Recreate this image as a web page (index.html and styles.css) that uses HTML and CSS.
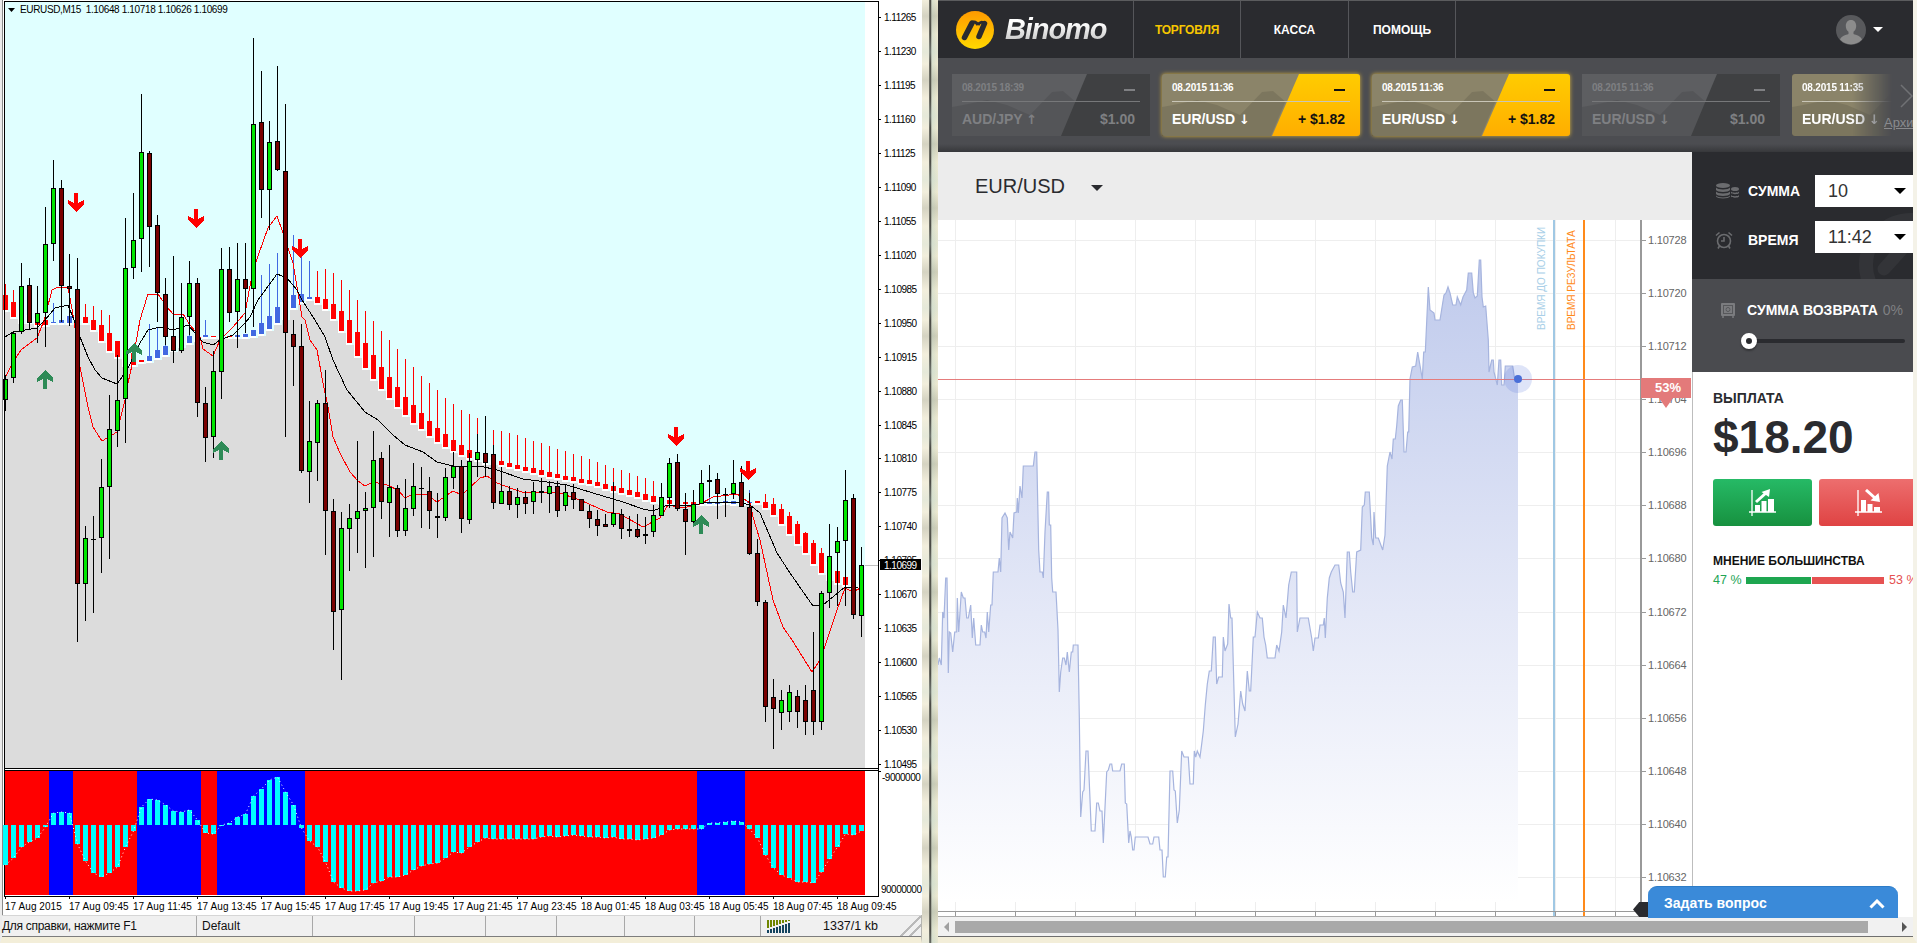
FILE: index.html
```html
<!DOCTYPE html>
<html>
  <head>
    <meta charset="utf-8">
    <title>EURUSD M15 / Binomo</title>
    <link rel="stylesheet" href="styles.css">
  </head>
  <body>
    <svg class="defs" width="0" height="0">
      <defs>
        <symbol id="hills" viewBox="0 0 198 62">
          <path d="M0 33L11 31L35 26L55 31L78 41L100 18L111 17L125 29L140 40L198 44V62H0Z" />
        </symbol>
      </defs>
    </svg>

    <div class="desk">
      <!-- terminal window -->
      <div class="mt4">
        <svg id="mt4chart" class="mt4-chart" width="919" height="915" viewBox="3 0 919 915"></svg>
        <div class="status">
          <div class="cell cell-help">Для справки, нажмите F1</div>
          <div class="cell cell-profile">Default</div>
          <div class="cell cell-a"></div>
          <div class="cell cell-b"></div>
          <div class="cell cell-c"></div>
          <div class="cell cell-d"></div>
          <div class="cell cell-e"></div>
          <div class="cell cell-f"></div>
          <div class="cell cell-net">
            <svg width="24" height="13" viewBox="0 0 24 13">
              <path class="net-top" d="M1 0h2v8H1zM4 0h2v7H4zM7 0h2v6H7zM10 0h2v5h-2zM13 0h2v4h-2zM16 0h2v3h-2zM19 0h2v2h-2zM22 0h2v1h-2z" />
              <path class="net-bottom" d="M1 10h2v3H1zM4 9h2v4H4zM7 8h2v5H7zM10 7h2v6h-2zM13 6h2v7h-2zM16 5h2v8h-2zM19 4h2v9h-2zM22 3h2v10h-2z" />
            </svg>
            <span class="net-text">1337/1 kb</span>
          </div>
        </div>
      </div>

      <div class="divider"></div>

      <!-- browser window -->
      <div class="web">
        <div class="topbar">
          <div class="logo">
            <svg width="40" height="40" viewBox="0 0 40 40">
              <defs>
                <linearGradient id="logofill" x1="0" y1="0" x2="0" y2="1">
                  <stop offset="0" stop-color="#ff9a00" />
                  <stop offset="1" stop-color="#ffd800" />
                </linearGradient>
              </defs>
              <circle cx="20" cy="20" r="19" fill="url(#logofill)" />
              <path class="logo-mark" d="M9.5 27.5L17 13M24 26.5L29.5 13.5" />
              <path class="logo-link" d="M17 13Q20.5 10.500 23 15M23 15Q26 10.500 29.5 13.5" />
            </svg>
            <span class="logo-text">Binomo</span>
          </div>
          <a class="nav nav-on" href="#">ТОРГОВЛЯ</a>
          <a class="nav" href="#">КАССА</a>
          <a class="nav nav-last" href="#">ПОМОЩЬ</a>
          <div class="user">
            <svg width="30" height="30" viewBox="0 0 30 30">
              <circle cx="15" cy="15" r="15" fill="#58595c" />
              <path fill="#8c8c8c" d="M15 5c3.4 0 5.2 2.7 5.2 6 0 2.6-1.100 4.800-2.700 5.800v2.200c3 1 7 2 8.500 5.500a15 15 0 0 1-22 0c1.500-3.500 5.500-4.500 8.500-5.500v-2.200c-1.600-1-2.700-3.200-2.700-5.800 0-3.300 1.800-6 5.200-6z" />
            </svg>
            <span class="user-caret"></span>
          </div>
        </div>

        <div class="deals">
          <div class="deal">
            <svg class="deal-hills"><use href="#hills" /></svg>
            <div class="deal-row deal-row-top"><span class="deal-date">08.2015 18:39</span><span class="deal-dash"></span></div>
            <div class="deal-row"><span>AUD/JPY <b class="deal-arrow">↑</b></span><span>$1.00</span></div>
          </div>
          <div class="deal deal-win">
            <svg class="deal-hills"><use href="#hills" /></svg>
            <div class="deal-row deal-row-top"><span class="deal-date">08.2015 11:36</span><span class="deal-dash"></span></div>
            <div class="deal-row"><span>EUR/USD <b class="deal-arrow">↓</b></span><span class="deal-sum">+ $1.82</span></div>
          </div>
          <div class="deal deal-win">
            <svg class="deal-hills"><use href="#hills" /></svg>
            <div class="deal-row deal-row-top"><span class="deal-date">08.2015 11:36</span><span class="deal-dash"></span></div>
            <div class="deal-row"><span>EUR/USD <b class="deal-arrow">↓</b></span><span class="deal-sum">+ $1.82</span></div>
          </div>
          <div class="deal">
            <svg class="deal-hills"><use href="#hills" /></svg>
            <div class="deal-row deal-row-top"><span class="deal-date">08.2015 11:36</span><span class="deal-dash"></span></div>
            <div class="deal-row"><span>EUR/USD <b class="deal-arrow">↓</b></span><span>$1.00</span></div>
          </div>
          <div class="deal deal-win deal-fade">
            <svg class="deal-hills"><use href="#hills" /></svg>
            <div class="deal-row deal-row-top"><span class="deal-date">08.2015 11:35</span></div>
            <div class="deal-row"><span>EUR/USD <b class="deal-arrow">↓</b></span></div>
          </div>
          <svg class="deals-next" width="14" height="24" viewBox="0 0 14 24"><path d="M1 1L12 12L1 23" /></svg>
          <a class="deals-archive" href="#">Архив</a>
        </div>

        <div class="trade">
          <div class="plot">
            <div class="plot-head">
              <span class="pair">EUR/USD</span>
              <span class="pair-caret"></span>
            </div>
            <svg id="plotchart" class="plot-chart" width="754" height="697" viewBox="938 220 754 697"></svg>
          </div>

          <div class="side">
            <div class="side-top">
              <svg class="side-mark" width="60" height="70" viewBox="0 0 60 70">
                <circle cx="53" cy="56" r="45" />
                <path d="M26 60L44 40" />
              </svg>
              <div class="field">
                <svg class="field-icon" width="24" height="16" viewBox="0 0 24 16">
                  <g class="coins">
                    <ellipse cx="8" cy="2.5" rx="7" ry="2.5" />
                    <path d="M1 4.5c1 2.600 13 2.600 14 0v2.500c-1 2.600-13 2.600-14 0zM1 8.500c1 2.600 13 2.600 14 0V11c-1 2.600-13 2.600-14 0zM1 12.500c1 2.600 13 2.600 14 0v1c-1 2.600-13 2.600-14 0z" />
                    <ellipse cx="20" cy="6" rx="4" ry="2" />
                    <path d="M16 8.500c.6 1.600 7.400 1.600 8 0V10c-.6 1.600-7.400 1.600-8 0zM16 12c.6 1.600 7.400 1.600 8 0v1.500c-.6 1.600-7.400 1.600-8 0z" />
                  </g>
                </svg>
                <span class="field-label">СУММА</span>
                <div class="picker"><span>10</span><i class="picker-caret"></i></div>
              </div>
              <div class="field field-time">
                <svg class="field-icon" width="24" height="20" viewBox="0 0 18 20" preserveAspectRatio="xMinYMid">
                  <g class="alarm">
                    <circle cx="9" cy="11" r="6.5" />
                    <path d="M9 7v4H6M4.5 16L3 18.5M13.5 16L15 18.5M1 5.5L4.5 2.500M17 5.5L13.5 2.500" />
                  </g>
                </svg>
                <span class="field-label">ВРЕМЯ</span>
                <div class="picker"><span>11:42</span><i class="picker-caret"></i></div>
              </div>
            </div>

            <div class="side-mid">
              <div class="back-row">
                <svg class="field-icon" width="16" height="16" viewBox="0 0 16 16">
                  <rect class="safe-body" x="1" y="1" width="14" height="13" rx="1" />
                  <rect class="safe-door" x="3.5" y="3.5" width="9" height="8" />
                  <circle class="safe-door" cx="8" cy="7.5" r="2" />
                  <path class="safe-feet" d="M3 14v2M13 14v2" />
                </svg>
                <span class="field-label">СУММА ВОЗВРАТА</span>
                <span class="back-pct">0%</span>
              </div>
              <div class="slider"><span class="slider-knob"></span></div>
            </div>

            <div class="side-pay">
              <div class="pay-label">ВЫПЛАТА</div>
              <div class="pay-sum">$18.20</div>
              <div class="pay-btns">
                <button class="btn btn-up">
                  <svg width="28" height="27" viewBox="0 0 28 27">
                    <path class="btn-line" d="M3 1V27M0 23H27" />
                    <path class="btn-fill" d="M6 16h5v7H6zM12.5 12h5v11h-5zM19 10h6v13h-6z" />
                    <path class="btn-line btn-arrow" d="M7 13L17 4" />
                    <path class="btn-fill" d="M12.5 3L21 0L20 8z" />
                  </svg>
                </button>
                <button class="btn btn-down">
                  <svg width="28" height="27" viewBox="0 0 28 27">
                    <path class="btn-line" d="M3 1V27M0 23H27" />
                    <path class="btn-fill" d="M6 11h5v12H6zM12.5 15h5v8h-5zM19 18h6v5h-6z" />
                    <path class="btn-line btn-arrow" d="M11 1L20 9" />
                    <path class="btn-fill" d="M25 13L15.5 11.5L23.5 4z" />
                  </svg>
                </button>
              </div>
              <div class="poll-label">МНЕНИЕ БОЛЬШИНСТВА</div>
              <div class="poll">
                <span class="poll-up">47 %</span>
                <span class="poll-bar poll-bar-up"></span>
                <span class="poll-bar poll-bar-down"></span>
                <span class="poll-down">53 %</span>
              </div>
            </div>
          </div>
        </div>

        <div class="hscroll">
          <i class="hscroll-left"></i>
          <div class="hscroll-thumb"></div>
          <i class="hscroll-right"></i>
        </div>

        <div class="chart-handle"></div>
        <div class="chat">
          <span>Задать вопрос</span>
          <svg width="16" height="10" viewBox="0 0 16 10"><path d="M1.5 8.5L8 2L14.5 8.5" /></svg>
        </div>
      </div>
    </div>

    <script src="chart.js"></script>
  </body>
</html>
```

FILE: styles.css
```css
* {
  box-sizing: border-box;
}
html,
body {
  margin: 0;
  height: 943px;
  overflow: hidden;
  background: #f3eed9;
  font-family: "Liberation Sans", Arial, sans-serif;
}
.defs {
  position: absolute;
}
.desk {
  display: flex;
  height: 943px;
}

/* terminal */
.mt4 {
  width: 922px;
  height: 943px;
  border-left: 2px solid #ececec;
  border-bottom: 6px solid #f3eed9;
  border-right: 1px solid #b5b5b0;
  display: flex;
  flex-direction: column;
}
.mt4-chart {
  display: block;
  margin-left: 1px;
  background: #fff;
  box-shadow: -1px 0 0 #8a8a8a;
}
.mt4 svg text {
  font-family: "Liberation Sans", Arial, sans-serif;
}
.mt4-price {
  font-size: 10px;
  letter-spacing: -0.5px;
  fill: #000;
}
.mt4-title {
  font-size: 10px;
  letter-spacing: -0.36px;
  fill: #000;
  white-space: pre;
}
.mt4-time {
  font-size: 10px;
  letter-spacing: 0.06px;
  fill: #000;
}
.mt4-now {
  font-size: 10px;
  letter-spacing: -0.5px;
  fill: #fff;
}
.status {
  display: flex;
  height: 22px;
  background: #f0f0f0;
  border-top: 1px solid #d6d6d6;
  border-bottom: 1px solid #7d7d7d;
  font-size: 12px;
  color: #111;
}
.cell {
  border-right: 1px solid #a8a8a8;
  padding: 3px 0 0 5px;
  white-space: nowrap;
}
.cell-help {
  width: 195px;
  padding-left: 0;
  letter-spacing: -0.3px;
}
.cell-profile {
  width: 116px;
}
.cell-a {
  width: 102px;
}
.cell-b {
  width: 71px;
}
.cell-c {
  width: 71px;
}
.cell-d {
  width: 68px;
}
.cell-e {
  width: 70px;
}
.cell-f {
  width: 66px;
}
.cell-net {
  flex: 1;
  border-right: none;
  display: flex;
  align-items: center;
  padding: 0 0 0 5px;
  background: linear-gradient(135deg, transparent 88%, #b9b9b9 88%, #b9b9b9 90%, transparent 90%, transparent 93%, #b9b9b9 93%, #b9b9b9 95%, transparent 95%);
}
.net-top {
  fill: #6f8600;
}
.net-bottom {
  fill: #14445f;
}
.net-text {
  margin-left: 33px;
  font-size: 12.5px;
}

/* window seam */
.divider {
  width: 16px;
  height: 943px;
  position: relative;
  background: linear-gradient(to right, #f2eedc 0, #f2eedc 7px, #8b8b82 7px, #4a4a44 8px, #4a4a44 9px, #8b8b82 9px, #d9e0cd 10px, #eee9d0 16px);
}
.divider::after {
  content: "";
  position: absolute;
  left: 0;
  top: 0;
  right: 0;
  bottom: 0;
  background: repeating-linear-gradient(to bottom, rgba(120, 125, 110, 0) 0, rgba(120, 125, 110, 0.24) 16px, rgba(120, 125, 110, 0) 34px, rgba(200, 220, 210, 0.3) 52px, rgba(200, 220, 210, 0) 64px);
}

/* browser */
.web {
  width: 979px;
  height: 943px;
  position: relative;
  border-right: 4px solid #f4f2e8;
  border-bottom: 6px solid #f3eed9;
  overflow: hidden;
  display: flex;
  flex-direction: column;
  background: #fff;
}
.topbar {
  height: 58px;
  flex: none;
  display: flex;
  background: #2a2b2f;
  border-top: 1px solid #5b5c5e;
}
.logo {
  width: 195px;
  padding-left: 17px;
  display: flex;
  align-items: center;
  gap: 10px;
}
.logo-mark {
  fill: none;
  stroke: #2a2b2f;
  stroke-width: 5.5;
  stroke-linecap: round;
}
.logo-link {
  fill: none;
  stroke: #2a2b2f;
  stroke-width: 3;
}
.logo-text {
  font-size: 29px;
  font-weight: bold;
  font-style: italic;
  letter-spacing: -1.1px;
  background: linear-gradient(to bottom, #fff 30%, #b8b8b8);
  -webkit-background-clip: text;
  background-clip: text;
  color: transparent;
  padding-right: 3px;
}
.nav {
  width: 107px;
  border-left: 1px solid #55565a;
  color: #fff;
  font-size: 12px;
  font-weight: bold;
  text-decoration: none;
  display: flex;
  align-items: center;
  justify-content: center;
}
.nav-on {
  color: #f6c600;
  letter-spacing: -0.2px;
}
.nav-on + .nav {
  width: 108px;
}
.nav-last {
  width: 108px;
  border-right: 1px solid #55565a;
}
.user {
  margin-left: auto;
  padding-right: 30px;
  display: flex;
  align-items: center;
  gap: 7px;
}
.user-caret {
  border-left: 5px solid transparent;
  border-right: 5px solid transparent;
  border-top: 5px solid #fff;
}

/* deal strip */
.deals {
  height: 94px;
  flex: none;
  position: relative;
  display: flex;
  gap: 12px;
  padding: 16px 0 0 14px;
  overflow: hidden;
  background: linear-gradient(to bottom, #4c4d51 0, #4c4d51 86px, #37383b 94px);
}
.deal {
  width: 198px;
  height: 62px;
  flex: none;
  position: relative;
  padding: 0 15px 0 10px;
  background: #5d5e61;
  color: #7f8083;
  font-size: 14px;
  font-weight: bold;
}
.deal::before {
  content: "";
  position: absolute;
  left: 0;
  top: 0;
  right: 0;
  bottom: 0;
  background: #3f4042;
  clip-path: polygon(135px 0, 100% 0, 100% 100%, 109px 100%);
}
.deal-hills {
  position: absolute;
  left: 0;
  top: 0;
  width: 198px;
  height: 62px;
  fill: rgba(0, 0, 0, 0.09);
  clip-path: polygon(0 0, 135px 0, 109px 100%, 0 100%);
}
.deal-row {
  position: relative;
  display: flex;
  justify-content: space-between;
  align-items: center;
  height: 34px;
}
.deal-row-top {
  height: 28px;
  margin-right: -5px;
  padding-right: 5px;
  border-bottom: 1px solid #77787a;
}
.deal-date {
  font-size: 10px;
  letter-spacing: -0.2px;
}
.deal-arrow {
  font-family: "DejaVu Sans", sans-serif;
  font-size: 13px;
  line-height: 14px;
}
.deal-dash {
  width: 11px;
  height: 2px;
  margin-top: 4px;
  background: #7f8083;
}
.deal-win {
  background: #8b8469;
  color: #fff;
  border-radius: 3px;
  box-shadow: 0 0 4px #d8b23c;
}
.deal-win::before {
  background: linear-gradient(to bottom, #ffcc00, #ffae00);
  clip-path: polygon(137px 0, 100% 0, 100% 100%, 110px 100%);
  border-radius: 0 3px 3px 0;
}
.deal-win .deal-hills {
  fill: rgba(0, 0, 0, 0.1);
}
.deal-win .deal-row-top {
  border-bottom-color: #c9c6b7;
}
.deal-win .deal-dash {
  background: #111;
}
.deal-sum {
  color: #111;
}
.deal-fade {
  -webkit-mask-image: linear-gradient(to right, #000 60px, transparent 100px);
  mask-image: linear-gradient(to right, #000 60px, transparent 100px);
}
.deals-next {
  position: absolute;
  left: 962px;
  top: 26px;
  fill: none;
  stroke: #707174;
  stroke-width: 1.5;
}
.deals-archive {
  position: absolute;
  left: 946px;
  top: 57px;
  font-size: 13px;
  color: #8a8b8e;
}

/* main row */
.trade {
  height: 765px;
  flex: none;
  display: flex;
}
.plot {
  width: 754px;
  flex: none;
}
.plot-head {
  height: 68px;
  display: flex;
  align-items: center;
  padding: 0 0 0 37px;
  background: #ececec;
  color: #2a2b2f;
}
.pair {
  font-size: 20px;
}
.pair-caret {
  margin: 3px 0 0 26px;
  border-left: 6px solid transparent;
  border-right: 6px solid transparent;
  border-top: 6px solid #2a2b2f;
}
.plot-chart {
  display: block;
}
.plot-chart text {
  font-family: "Liberation Sans", Arial, sans-serif;
}
.plot-price {
  font-size: 11px;
  letter-spacing: -0.2px;
  fill: #666;
}
.plot-tag {
  font-size: 10px;
}
.plot-badge {
  font-size: 13px;
  font-weight: bold;
  fill: #fff;
}

/* right column */
.side {
  flex: 1;
  display: flex;
  flex-direction: column;
}
.side-top {
  height: 127px;
  position: relative;
  overflow: hidden;
  padding: 23px 0 0 23px;
  background: #2a2b2f;
}
.side-mark {
  position: absolute;
  right: 0;
  bottom: 0;
  fill: none;
  stroke: #333438;
}
.side-mark circle {
  stroke-width: 14;
}
.side-mark path {
  stroke-width: 13;
  stroke-linecap: round;
  stroke: #333438;
}
.field {
  position: relative;
  display: flex;
  align-items: center;
  height: 32px;
  margin-bottom: 14px;
}
.field-icon {
  flex: none;
  margin-right: 9px;
}
.field-label {
  color: #fff;
  font-size: 14px;
  font-weight: bold;
}
.field-time .field-label,
.field-time .field-icon {
  margin-top: 6px;
}
.picker {
  position: absolute;
  left: 100px;
  top: 0;
  width: 98px;
  height: 32px;
  padding: 0 7px 0 13px;
  display: flex;
  align-items: center;
  justify-content: space-between;
  background: #fff;
  font-size: 18px;
  color: #333;
}
.picker-caret {
  border-left: 6px solid transparent;
  border-right: 6px solid transparent;
  border-top: 6px solid #000;
}
.coins {
  fill: #6b6c6f;
}
.alarm {
  fill: none;
  stroke: #6b6c6f;
  stroke-width: 1.6;
}
.safe-body {
  fill: #7b7c7f;
}
.safe-door {
  fill: none;
  stroke: #57585b;
}
.safe-feet {
  fill: none;
  stroke: #7b7c7f;
  stroke-width: 1.5;
}
.side-mid {
  height: 93px;
  padding: 22px 0 0 28px;
  background: #4a4b4f;
}
.back-row {
  display: flex;
  align-items: center;
  height: 18px;
}
.back-row .field-icon {
  margin-right: 11px;
}
.back-pct {
  margin-left: 5px;
  color: #7f8083;
  font-size: 14px;
}
.slider {
  position: relative;
  width: 152px;
  height: 4px;
  margin: 20px 0 0 33px;
  border-radius: 2px;
  background: #2a2b2f;
}
.slider-knob {
  position: absolute;
  left: -12px;
  top: -6px;
  width: 16px;
  height: 16px;
  border: 5px solid #fff;
  border-radius: 50%;
  background: #2a2b2f;
  box-shadow: 0 2px 2px rgba(0, 0, 0, 0.3);
}
.side-pay {
  flex: 1;
  padding: 18px 0 0 20px;
  background: #fff;
  border-left: 1px solid #bdbdbd;
  color: #2a2b2f;
}
.pay-label {
  font-size: 14px;
  font-weight: bold;
  line-height: 16px;
}
.pay-sum {
  margin-top: 8px;
  font-size: 46px;
  font-weight: bold;
  line-height: 46px;
}
.pay-btns {
  display: flex;
  gap: 7px;
  margin-top: 19px;
}
.btn {
  height: 47px;
  padding: 0;
  border: none;
  border-radius: 3px;
  display: flex;
  align-items: center;
  justify-content: center;
}
.btn-up {
  width: 99px;
  background: linear-gradient(to bottom, #26ba66, #17913f);
}
.btn-down {
  width: 99px;
  background: linear-gradient(to bottom, #ed6e6e, #df4343);
}
.btn-line {
  fill: none;
  stroke: #fff;
  stroke-width: 1.3;
}
.btn-arrow {
  stroke-width: 3;
}
.btn-fill {
  fill: #fff;
}
.poll-label {
  margin-top: 28px;
  font-size: 12px;
  font-weight: bold;
  line-height: 14px;
  color: #111;
  white-space: nowrap;
}
.poll {
  display: flex;
  align-items: center;
  height: 14px;
  margin-top: 5px;
  font-size: 12.5px;
  white-space: nowrap;
}
.poll-bar {
  height: 7px;
  flex: none;
}
.poll-up {
  width: 33px;
  color: #22a455;
  flex: none;
}
.poll-down {
  margin-left: 5px;
  color: #e55050;
}
.poll-bar-up {
  width: 65px;
  margin-right: 1px;
  background: #1ea650;
}
.poll-bar-down {
  width: 72px;
  background: #e65252;
}

/* page scrollbar */
.hscroll {
  flex: 1;
  display: flex;
  align-items: center;
  background: #f1f1f1;
  border-bottom: 1px solid #6f6f6f;
}
.hscroll-thumb {
  width: 913px;
  height: 12px;
  background: #a9a9a9;
}
.hscroll-left,
.hscroll-right {
  display: flex;
  align-items: center;
  justify-content: center;
}
.hscroll-left {
  width: 17px;
}
.hscroll-right {
  flex: 1;
  padding-left: 27px;
}
.hscroll-left::before {
  content: "";
  border-top: 5px solid transparent;
  border-bottom: 5px solid transparent;
  border-right: 5px solid #a0a0a0;
}
.hscroll-right::before {
  content: "";
  border-top: 5px solid transparent;
  border-bottom: 5px solid transparent;
  border-left: 5px solid #555;
}

/* overlays on the chart */
.chart-handle {
  position: absolute;
  left: 695px;
  top: 902px;
  width: 18px;
  height: 15px;
  background: #2a2b2f;
  clip-path: polygon(0 50%, 35% 0, 100% 0, 100% 100%, 35% 100%);
}
.chat {
  position: absolute;
  left: 710px;
  top: 886px;
  width: 250px;
  height: 32px;
  padding: 0 13px 0 16px;
  display: flex;
  align-items: center;
  justify-content: space-between;
  background: #3a8ad9;
  border-top: 1px solid #2d7cc7;
  border-radius: 9px 9px 0 0;
  color: #fff;
  font-size: 14px;
  font-weight: bold;
}
.chat svg {
  fill: none;
  stroke: #fff;
  stroke-width: 3;
  margin-top: 3px;
}
```

FILE: chart.js
```js
var SVGNS = "http://www.w3.org/2000/svg";

function add(parent, tag, attrs, text) {
  var node = document.createElementNS(SVGNS, tag);
  for (var key in attrs) node.setAttribute(key, attrs[key]);
  if (text) node.textContent = text;
  parent.appendChild(node);
  return node;
}
function line(parent, x1, y1, x2, y2, color, width) {
  add(parent, "line", {
    x1: x1, y1: y1, x2: x2, y2: y2,
    stroke: color, "stroke-width": width || 1, "shape-rendering": "crispEdges"
  });
}
function box(parent, x, y, w, h, color) {
  add(parent, "rect", { x: x, y: y, width: w, height: h, fill: color, "shape-rendering": "crispEdges" });
}
function barX(k) {
  return 5.5 + 8 * k;
}

//---------- terminal chart ----------
var mt = document.getElementById("mt4chart");

// one row per bar: up, high, body top, body bottom, low
var candles = [
  [1,375,379,400,411],[1,331,333,378,383],[1,263,286,332,334],[0,278,285,323,329],[1,286,313,323,343],
  [1,207,244,313,347],[1,160,188,244,261],[0,180,188,286,322],[0,254,286,289,326],[0,258,289,584,642],
  [1,526,538,584,621],[1,516,539,540,613],[1,459,487,538,573],[1,395,429,487,559],[1,355,400,431,447],
  [1,218,268,399,443],[1,193,240,268,279],[1,94,152,239,272],[0,151,153,227,267],[0,215,225,293,322],
  [0,278,294,337,345],[0,256,336,351,363],[1,283,317,351,353],[1,261,283,317,335],[0,278,283,403,417],
  [0,387,403,438,462],[1,351,371,437,458],[1,248,269,372,399],[0,247,269,313,322],[1,243,279,312,348],
  [0,243,279,289,333],[1,38,124,289,327],[0,71,122,190,218],[1,121,142,190,230],[0,66,141,170,171],
  [0,104,171,333,437],[0,320,334,347,386],[0,324,346,471,473],[1,401,441,472,503],[1,400,403,443,481],
  [0,370,403,511,555],[0,499,511,612,650],[1,512,528,610,680],[1,504,518,529,571],[1,441,511,519,553],
  [1,492,508,511,568],[1,431,460,508,557],[0,452,458,502,519],[1,445,487,503,537],[0,485,488,531,537],
  [1,479,508,531,536],[1,463,486,509,516],[0,467,488,489,528],[0,477,491,511,529],[0,493,516,518,538],
  [1,468,477,518,521],[1,452,466,478,489],[0,460,466,519,533],[1,453,461,520,524],[1,434,452,460,477],
  [0,416,453,463,477],[0,445,454,503,509],[1,467,491,504,504],[0,486,491,505,510],[1,488,497,505,518],
  [0,491,497,504,514],[1,482,491,502,514],[0,478,491,493,503],[1,481,486,494,513],[0,481,486,511,517],
  [1,485,492,506,511],[0,484,492,500,509],[0,500,499,511,511],[0,505,511,519,528],[0,510,519,526,536],
  [0,514,524,527,527],[1,482,513,525,527],[0,509,514,529,539],[0,516,529,531,537],[0,514,529,537,538],
  [1,517,534,536,544],[1,505,515,532,537],[1,483,497,516,516],[1,458,463,498,508],[0,454,462,509,511],
  [0,493,509,522,555],[1,490,504,522,527],[1,470,483,504,504],[1,465,480,482,497],[0,473,479,494,519],
  [0,488,494,495,517],[1,460,483,494,499],[0,466,482,507,507],[0,493,507,554,555],[0,539,553,602,606],
  [0,600,602,707,722],[0,679,697,709,749],[1,690,700,713,730],[1,685,692,712,722],[0,690,696,712,728],
  [0,685,700,722,735],[0,632,690,722,735],[1,591,593,722,730],[1,524,556,593,608],[1,527,541,553,606],
  [1,470,500,541,606],[0,494,498,615,619],[1,547,565,616,637]
];

// indicator bars: color, top, bottom, top of thin line (0 = none)
var env = [
  ["r",295,310,284],["r",302,317,290],["r",310,322,0],["r",315,322,0],["r",318,325,0],["r",320,325,0],
  ["b",322,323,303],["b",320,323,308],["b",316,323,0],["r",316,323,0],["r",317,323,304],["r",320,330,306],
  ["r",325,341,310],["r",333,351,315],["r",341,357,0],["r",350,365,0],["r",353,365,0],["r",360,362,0],
  ["b",356,361,324],["b",350,358,327],["b",346,355,322],["b",340,350,0],["b",338,346,0],["b",336,343,325],
  ["b",335,340,0],["b",335,337,320],["r",336,337,0],["r",336,337,0],["r",336,337,0],["b",335,337,0],
  ["b",334,337,0],["b",330,336,0],["b",323,334,275],["b",316,329,264],["b",307,323,253],["b",300,318,0],
  ["b",295,308,235],["b",294,302,257],["b",297,299,261],["r",297,303,271],["r",299,309,269],["r",304,319,273],
  ["r",311,331,280],["r",320,343,290],["r",332,356,300],["r",343,368,311],["r",355,379,321],["r",367,389,331],
  ["r",377,398,340],["r",387,407,349],["r",397,415,359],["r",405,423,367],["r",413,429,376],["r",421,436,383],
  ["r",428,442,390],["r",434,447,398],["r",440,451,404],["r",445,455,410],["r",450,458,414],["r",453,460,418],
  ["r",453,463,0],["r",457,463,430],["r",461,465,431],["r",463,467,433],["r",465,469,435],["r",467,471,438],
  ["r",468,473,441],["r",470,475,443],["r",472,477,446],["r",474,478,449],["r",476,480,451],["r",477,481,454],
  ["r",479,483,456],["r",480,484,459],["r",482,486,462],["r",484,489,465],["r",486,491,468],["r",488,493,470],
  ["r",490,495,473],["r",492,497,476],["r",494,500,478],["r",496,502,481],["r",498,503,483],["r",500,504,0],
  ["r",501,504,0],["r",502,504,493],["r",502,504,490],["r",502,504,0],["b",502,504,493],["b",502,504,0],
  ["b",501,503,0],["b",501,504,0],["b",501,504,0],["b",502,503,490],["r",501,503,0],["r",502,508,494],
  ["r",504,515,498],["r",509,524,504],["r",516,534,512],["r",524,544,521],["r",533,553,532],["r",543,564,540],
  ["r",553,573,548],["r",562,579,0],["r",571,583,0],["r",577,585,0],["r",582,587,0],["r",584,588,0]
];

var redLine = [
  [5,378],[13,362],[21,350],[37,338],[43,323],[45,317],[52,290],[58,287],[68,287],[74,320],[80,367],[88,407],
  [93,427],[102,441],[117,432],[125,400],[128,383],[132,365],[140,320],[148,294],[158,294],[167,307],[173,314],
  [183,314],[190,325],[200,337],[203,349],[213,356],[220,340],[233,327],[245,313],[253,270],[268,228],[277,216],
  [283,233],[288,248],[293,263],[302,317],[305,320],[310,340],[317,350],[323,383],[328,407],[333,437],[340,453],
  [350,472],[358,481],[365,486],[373,482],[387,485],[398,490],[405,498],[413,494],[427,495],[437,502],[453,491],
  [462,495],[480,478],[487,476],[497,483],[513,489],[525,493],[542,492],[560,493],[580,500],[607,512],[620,514],
  [643,527],[660,518],[668,505],[683,508],[700,504],[713,497],[737,494],[750,503],[753,517],[760,540],[773,600],
  [783,627],[792,640],[812,672],[820,660],[827,640],[837,610],[845,588],[853,592],[862,587]
];
var blackLine = [
  [5,337],[13,332],[37,328],[45,320],[55,308],[68,305],[74,320],[80,337],[88,357],[95,370],[102,378],[117,384],
  [127,370],[140,343],[148,330],[160,327],[173,330],[188,325],[203,342],[213,345],[220,340],[233,335],[245,323],
  [250,317],[258,300],[277,274],[287,278],[297,290],[302,300],[315,320],[325,337],[333,360],[347,390],[365,412],
  [378,420],[393,435],[405,445],[423,452],[437,462],[453,466],[480,466],[497,470],[523,479],[547,482],[567,485],
  [593,493],[623,502],[643,509],[653,511],[667,505],[693,505],[710,502],[737,502],[750,505],[760,513],[777,553],
  [790,573],[813,606],[823,605],[845,587],[858,588]
];

// pane bars, read as the end of each bar from the zero line at y=825
var hist = [
  40,33,22,17,13,2,-12,-13,-12,19,36,48,52,48,42,22,6,-18,-26,-25,-20,-14,-13,-15,-5,8,9,0,-2,-8,
  -11,-29,-36,-45,-48,-33,-20,3,16,22,37,57,63,66,66,65,58,56,52,52,50,45,41,39,38,33,27,28,22,17,
  13,14,14,14,14,14,14,12,11,12,11,10,11,12,12,13,12,14,14,15,14,13,10,5,4,4,4,4,-2,-2,-3,-4,-3,
  4,13,30,43,50,53,57,57,58,47,34,22,9,10,6
];

var signals = [
  [76,193,1],[196,209,1],[300,239,1],[676,427,1],[748,461,1],
  [45,370,0],[134,343,0],[221,441,0],[701,515,0]
];

function arrow(x, top, down) {
  var shape = down
    ? [[-2,0],[2,0],[2,10],[8,7],[8,11],[0,19],[-8,11],[-8,7],[-2,10]]
    : [[-2,19],[2,19],[2,9],[8,12],[8,8],[0,0],[-8,8],[-8,12],[-2,9]];
  var pts = shape.map(function (p) { return (x + p[0]) + "," + (top + p[1]); }).join(" ");
  add(mt, "polygon", { points: pts, fill: down ? "#ff0000" : "#2e8b57", "shape-rendering": "crispEdges" });
}
function polyline(parent, pts, color) {
  add(parent, "polyline", {
    points: pts.join(" "), fill: "none", stroke: color, "stroke-width": 1, "shape-rendering": "crispEdges"
  });
}

function drawTerminal() {
  box(mt, 5, 2, 860, 766, "#e0ffff");

  var ground = ["5,768", "5," + (env[0][2] + 2)];
  env.forEach(function (e, k) {
    ground.push((barX(k) - 3.5) + "," + (e[2] + 2), (barX(k) + 4.5) + "," + (e[2] + 2));
  });
  ground.push("865," + (env[107][2] + 2), "865,768");
  add(mt, "polygon", { points: ground.join(" "), fill: "#dcdcdc", "shape-rendering": "crispEdges" });

  env.forEach(function (e, k) {
    var c = e[0] == "r" ? "#ff0000" : "#4169e1";
    var x = barX(k);
    if (e[3]) line(mt, x, e[3], x, e[1], c);
    box(mt, x - 3.5, e[1], 6, e[2] - e[1] + 2, "#fff");
    box(mt, x - 2.5, e[1], 5, e[2] - e[1], c);
  });

  polyline(mt, redLine, "#ff0000");
  polyline(mt, blackLine, "#000");

  candles.forEach(function (c, k) {
    var x = barX(k);
    line(mt, x, c[1], x, c[4], "#000");
    box(mt, x - 2.5, c[2], 5, Math.max(c[3] - c[2], 1), "#000");
    if (c[3] - c[2] > 2) box(mt, x - 1.5, c[2] + 1, 3, c[3] - c[2] - 2, c[0] ? "#00e600" : "#7a0000");
  });

  signals.forEach(function (s) { arrow(s[0], s[1], s[2]); });

  // frame and axis
  line(mt, 4, 1.5, 879, 1.5, "#000");
  line(mt, 4.5, 1, 4.5, 897, "#000");
  line(mt, 4, 768.5, 879, 768.5, "#000");
  line(mt, 4, 770.5, 879, 770.5, "#000");
  line(mt, 4, 896, 879, 896, "#000");
  line(mt, 878.5, 1, 878.5, 897, "#000");

  for (var i = 0; i <= 22; i++) {
    var y = 17 + 33.96 * i;
    line(mt, 879, Math.round(y) + 0.5, 881, Math.round(y) + 0.5, "#000");
    add(mt, "text", { x: 884, y: y + 4, "class": "mt4-price" }, (1.11265 - 0.00035 * i).toFixed(5));
  }

  add(mt, "polygon", { points: "8,8 15,8 11.5,12", fill: "#000" });
  add(mt, "text", { x: 20, y: 13, "class": "mt4-title" }, "EURUSD,M15  1.10648 1.10718 1.10626 1.10699");

  line(mt, 865, 565.5, 878, 565.5, "#c0c0c0");
  box(mt, 880, 559, 41, 11, "#000");
  add(mt, "text", { x: 884, y: 568.5, "class": "mt4-now" }, "1.10699");

  // lower pane
  var zones = [[5,49,"#ff0000"],[49,73,"#0000ff"],[73,137,"#ff0000"],[137,201,"#0000ff"],[201,217,"#ff0000"],
    [217,305,"#0000ff"],[305,697,"#ff0000"],[697,745,"#0000ff"],[745,865,"#ff0000"]];
  zones.forEach(function (z) { box(mt, z[0], 771, z[1] - z[0], 124, z[2]); });

  var tips = [];
  hist.forEach(function (h, k) {
    var x = barX(k);
    box(mt, x - 2.5, h < 0 ? 825 + h : 825, 5, Math.max(Math.abs(h), 1), "#00ffff");
    tips.push(x + "," + (825 + h));
  });
  add(mt, "polyline", { points: tips.join(" "), fill: "none", stroke: "#fff", "stroke-width": 1, "stroke-dasharray": "1 3" });

  line(mt, 879, 771.5, 881, 771.5, "#000");
  add(mt, "text", { x: 882, y: 781, "class": "mt4-price" }, "-9000000");
  add(mt, "text", { x: 881, y: 893, "class": "mt4-price" }, "90000000");

  var times = ["17 Aug 2015","17 Aug 09:45","17 Aug 11:45","17 Aug 13:45","17 Aug 15:45","17 Aug 17:45","17 Aug 19:45",
    "17 Aug 21:45","17 Aug 23:45","18 Aug 01:45","18 Aug 03:45","18 Aug 05:45","18 Aug 07:45","18 Aug 09:45"];
  times.forEach(function (t, i) {
    line(mt, 5.5 + 64 * i, 896, 5.5 + 64 * i, 899, "#000");
    add(mt, "text", { x: 5 + 64 * i, y: 909.5, "class": "mt4-time" }, t);
  });
}

//---------- web chart ----------
var plot = document.getElementById("plotchart");

var ticks = [
  [938,665],[939.3,658],[941.3,665],[942.7,612],[944,618],[945.7,578],[947,578],[948.3,673],[949.3,632],[950.7,633],
  [952.7,652],[954.7,632],[956.7,632],[957.3,598],[958.7,632],[961.3,592],[963.3,598],[965,598],[966.7,618],[968.3,618],
  [970.7,605],[972.3,638],[973.7,618],[975.7,645],[980,645],[981.3,625],[982.7,632],[984.7,632],[986,638],[987.3,612],
  [988.7,632],[990.7,605],[992,605],[993.3,572],[998,572],[999.3,558],[1000.7,572],[1002,518],[1005,513],[1007.3,518],
  [1008.7,550],[1010,532],[1012.7,538],[1014,513],[1016.7,512],[1017.3,498],[1018.3,513],[1020,486],[1022,498],[1023.3,466],
  [1033.3,466],[1035,452],[1036.7,452],[1038.7,550],[1040,572],[1042.3,572],[1043.3,578],[1045,532],[1047.3,492],[1048.6,492],
  [1049.3,525],[1050.7,525],[1051.7,578],[1052.7,592],[1056,592],[1058,630],[1059.3,692],[1060.7,672],[1062.7,658],[1064.3,658],
  [1066,665],[1067.3,652],[1069.3,672],[1071.3,652],[1072.7,652],[1073.3,645],[1078,645],[1079.3,717],[1080.7,817],[1082.7,792],
  [1084,790],[1086,751],[1088,751],[1091.3,831],[1095,831],[1096.7,803],[1098.3,803],[1100,811],[1102,811],[1103.3,843],
  [1106.7,772],[1108.3,770],[1110,764],[1111.7,764],[1112.7,771],[1120,771],[1121.7,764],[1124.3,764],[1125.3,803],[1126.7,804],
  [1128.7,843],[1130,831],[1131.3,837],[1132.7,850],[1134,850],[1135.3,837],[1148,837],[1150,844],[1152.7,844],[1154,837],
  [1158.7,837],[1160,850],[1162,850],[1163.3,877],[1165.3,877],[1166.7,857],[1168,857],[1170,771],[1172.7,771],[1174,790],
  [1175.3,791],[1177.3,823],[1179.3,810],[1181.7,751],[1184,757],[1188.3,757],[1190,784],[1193.3,784],[1194.3,751],[1195.7,757],
  [1197.3,751],[1200,757],[1201.7,744],[1203.3,731],[1205.3,705],[1207.3,684],[1209.3,671],[1211.3,671],[1213.3,637],[1215.3,637],
  [1216.7,684],[1218.7,677],[1222.3,677],[1223.3,637],[1225,651],[1227.7,644],[1229,604],[1230.7,618],[1232,618],[1235.3,737],
  [1238,724],[1240.7,691],[1242.7,704],[1245,711],[1247.3,671],[1249.3,691],[1250.7,691],[1253.3,637],[1255,637],[1257.3,612],
  [1260,618],[1262.3,618],[1264,637],[1265.7,645],[1267.3,658],[1275,658],[1276.7,645],[1279,651],[1281.7,632],[1283.3,605],
  [1286,618],[1288.7,585],[1291.3,572],[1296.7,572],[1297.3,632],[1300,618],[1308.3,618],[1311.7,638],[1313.3,651],[1315,638],
  [1318.3,638],[1320,625],[1323.3,625],[1324.3,618],[1325.3,638],[1327.3,598],[1329.3,578],[1331.3,572],[1335,565],[1338.7,565],
  [1340.7,583],[1343.3,592],[1345,618],[1347.3,552],[1349.3,552],[1350.7,572],[1352.7,592],[1354.3,592],[1356.7,552],[1360.7,550],
  [1362.3,507],[1364.3,505],[1365.3,492],[1369.3,492],[1371.7,538],[1373.3,545],[1374,512],[1375.7,538],[1378.3,538],[1382.7,550],
  [1385,535],[1387.3,466],[1390,452],[1392,459],[1393.3,439],[1395.3,439],[1396.7,426],[1398.3,406],[1400.7,400],[1402.3,400],
  [1404,452],[1406,452],[1407.7,432],[1408.7,432],[1410,379],[1412.3,367],[1415.7,366],[1417.7,352],[1422.3,379],[1423.7,352],
  [1425.3,352],[1428.3,287],[1430,310],[1434,313],[1435,320],[1440,320],[1442.7,303],[1444,295],[1446,293],[1448,287],
  [1450,293],[1452.7,305],[1456,305],[1457.3,297],[1460.7,305],[1463,297],[1466.7,290],[1468.3,273],[1471.7,273],[1473.3,293],
  [1475,298],[1477.3,296],[1479.3,260],[1480.7,260],[1482,297],[1483.3,307],[1485.7,306],[1488.3,340],[1489,372],[1491.7,360],
  [1493.3,360],[1494,372],[1497.3,385],[1499,360],[1500.7,360],[1501.7,385],[1504,385],[1505.3,366],[1512.7,366],[1514.3,377],[1518,379]
];

function drawPlot() {
  var defs = add(plot, "defs", {});
  var grad = add(defs, "linearGradient", { id: "areafill", gradientUnits: "userSpaceOnUse", x1: 0, y1: 260, x2: 0, y2: 902 });
  add(grad, "stop", { offset: 0, "stop-color": "#bfcaec" });
  add(grad, "stop", { offset: 0.55, "stop-color": "#e4e8f7" });
  add(grad, "stop", { offset: 1, "stop-color": "#ffffff" });

  var i, y;
  for (i = 0; i < 12; i++) line(plot, 955.5 + 60 * i, 220, 955.5 + 60 * i, 912, "#eeeeee", 1);
  for (i = 0; i < 13; i++) {
    y = Math.round(240 + 53.08 * i) + 0.5;
    line(plot, 938, y, 1641, y, "#eeeeee", 1);
  }

  var area = "M938,902L" + ticks.join("L") + "L1518,902Z";
  add(plot, "path", { d: area, fill: "url(#areafill)" });
  add(plot, "polyline", { points: ticks.join(" "), fill: "none", stroke: "#a6b4de", "stroke-width": 1.2 });

  line(plot, 1554, 220, 1554, 917, "#a0c8e4", 2);
  line(plot, 1584, 220, 1584, 917, "#ff8a1a", 2);
  add(plot, "text", { x: 1544.5, y: 330, transform: "rotate(-90 1544.5 330)", "class": "plot-tag", fill: "#a9cfe8" }, "ВРЕМЯ ДО ПОКУПКИ");
  add(plot, "text", { x: 1574.5, y: 330, transform: "rotate(-90 1574.5 330)", "class": "plot-tag", fill: "#ff8a1a" }, "ВРЕМЯ РЕЗУЛЬТАТА");

  line(plot, 938, 379.5, 1641, 379.5, "#e57c7c", 1);
  add(plot, "circle", { cx: 1518, cy: 379, r: 14, fill: "rgba(90,120,220,0.2)" });
  add(plot, "circle", { cx: 1518, cy: 379, r: 4, fill: "#4a6fd8" });

  line(plot, 1641, 220, 1641, 917, "#999999", 2);
  for (i = 0; i < 13; i++) {
    y = Math.round(240 + 53.08 * i);
    line(plot, 1642, y + 0.5, 1646, y + 0.5, "#999999");
    add(plot, "text", { x: 1648, y: y + 4, "class": "plot-price" }, (1.10728 - 0.00008 * i).toFixed(5));
  }

  add(plot, "polygon", { points: "1641,378 1691,378 1691,398 1673,398 1666,408 1659,398 1641,398", fill: "#e37a7a" });
  add(plot, "text", { x: 1668, y: 392, "text-anchor": "middle", "class": "plot-badge" }, "53%");
  line(plot, 1691.5, 220, 1691.5, 917, "#ffffff");

  line(plot, 938, 911.5, 1641, 911.5, "#999999");
  line(plot, 938, 916.5, 1692, 916.5, "#aaaaaa");
  for (i = 0; i < 12; i++) line(plot, 955.5 + 60 * i, 912, 955.5 + 60 * i, 916, "#999999");
}

drawTerminal();
drawPlot();
```
